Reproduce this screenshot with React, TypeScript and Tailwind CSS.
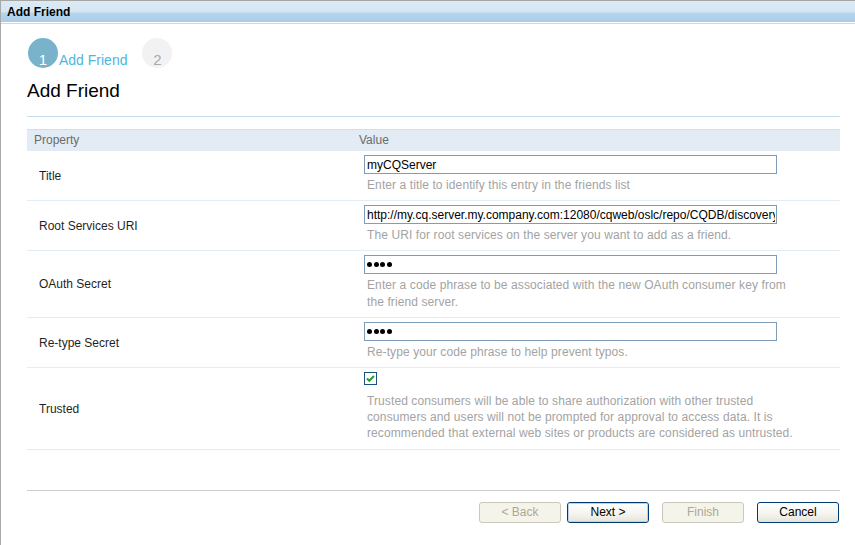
import React from 'react';

const font = { fontFamily: '"Liberation Sans", Arial, sans-serif' };

type Row = {
  label: string;
  kind: 'text' | 'password' | 'check';
  value?: string;
  help: string;
};

const rows: Row[] = [
  { label: 'Title', kind: 'text', value: 'myCQServer', help: 'Enter a title to identify this entry in the friends list' },
  {
    label: 'Root Services URI',
    kind: 'text',
    value: 'http://my.cq.server.my.company.com:12080/cqweb/oslc/repo/CQDB/discovery',
    help: 'The URI for root services on the server you want to add as a friend.',
  },
  {
    label: 'OAuth Secret',
    kind: 'password',
    help: 'Enter a code phrase to be associated with the new OAuth consumer key from the friend server.',
  },
  { label: 'Re-type Secret', kind: 'password', help: 'Re-type your code phrase to help prevent typos.' },
  {
    label: 'Trusted',
    kind: 'check',
    help: 'Trusted consumers will be able to share authorization with other trusted consumers and users will not be prompted for approval to access data. It is recommended that external web sites or products are considered as untrusted.',
  },
];

const Checkbox: React.FC = () => (
  <div className="w-[13px] h-[13px] border border-[#1c5180] bg-white flex items-center justify-center">
    <svg width="9" height="9" viewBox="0 0 9 9">
      <path d="M1 4.5 L3.3 6.8 L8 2" stroke="#21a121" strokeWidth="2" fill="none" />
    </svg>
  </div>
);

// masked field, drawn so the dots look like the old Windows bullets
const PasswordBox: React.FC = () => (
  <div className="w-[413px] h-[19px] border border-[#7f9db9] bg-white pl-[2px] flex items-center gap-[1.5px]">
    <span className="w-[5px] h-[5px] rounded-full bg-black" />
    <span className="w-[5px] h-[5px] rounded-full bg-black" />
    <span className="w-[5px] h-[5px] rounded-full bg-black" />
    <span className="w-[5px] h-[5px] rounded-full bg-black" />
  </div>
);

const WizButton: React.FC<{ label: string; disabled?: boolean; primary?: boolean }> = ({ label, disabled, primary }) => {
  if (disabled) {
    return (
      <div className="w-[82px] h-[21px] rounded-[3px] border border-[#cac8bb] bg-[#f5f4ea] text-[#aca899] text-[12px] leading-[19px] text-center">
        {label}
      </div>
    );
  }
  return (
    <div className="w-[82px] h-[21px] rounded-[3px] border border-[#003c74] bg-[linear-gradient(to_bottom,#ffffff,#f3f3ef_60%,#e6e4d8)] text-black text-[12px] text-center">
      <div
        className={
          primary
            ? 'h-full rounded-[2px] border border-[#b9d1ea] leading-[17px]'
            : 'h-full leading-[19px]'
        }
      >
        {label}
      </div>
    </div>
  );
};

const App: React.FC = () => {
  return (
    <div className="w-[855px] h-[545px] bg-white border-l border-[#a9a9a9] overflow-hidden" style={font}>
      {/* Title bar */}
      <div className="h-[22px] border-t border-[#a5a5a5] bg-[linear-gradient(to_bottom,#dceaf6_0px,#d5e6f3_11px,#b6d5ec_12px,#a9cce8_100%)] pl-[6px] pt-[2px]">
        <span className="block text-[12px] leading-[19px] font-bold text-black">Add Friend</span>
      </div>
      <div className="h-px bg-white" />
      <div className="h-px bg-[#d6d6d6]" />

      <div className="pl-[26px] pr-[15px]">
        {/* Steps */}
        <div className="flex items-start mt-[14px] h-[30px]">
          <div className="w-[30px] h-[30px] ml-[1px] rounded-full bg-[#79b2cb] flex justify-center pt-[13px]">
            <span className="text-[15px] leading-[17px] text-white">1</span>
          </div>
          <span className="ml-[1px] mt-[14px] text-[14px] leading-[16px] text-[#4db6dc]">Add Friend</span>
          <div className="w-[30px] h-[30px] ml-[15px] rounded-full bg-[#f2f2f2] flex justify-center pt-[13px]">
            <span className="text-[15px] leading-[17px] text-[#a9a9a9]">2</span>
          </div>
        </div>

        <h1 className="mt-[12px] text-[19px] leading-[22px] text-black">Add Friend</h1>
        <div className="mt-[14px] h-px bg-[#c6dfed]" />

        {/* Property table */}
        <div className="mt-[12px]">
          <div className="flex h-[22px] border-t border-[#d0dfeb] bg-[#e3ecf4] text-[12px] leading-[21px] text-[#6b6b6b]">
            <div className="w-[325px] pl-[7px]">Property</div>
            <div className="flex-1 pl-[7px]">Value</div>
          </div>

          {rows.map((r) => (
            <div key={r.label} className="flex border-b border-[#e3edf5]">
              <div className="w-[325px] pl-[12px] flex items-center text-[12px] text-[#1f1f1f]">{r.label}</div>
              <div className={r.kind === 'check' ? 'flex-1 pl-[12px] pt-[4px] pb-[8px]' : 'flex-1 pl-[12px] pt-[4px] pb-[6px]'}>
                {r.kind === 'check' && <Checkbox />}
                {r.kind === 'password' && <PasswordBox />}
                {r.kind === 'text' && (
                  <input
                    readOnly
                    type="text"
                    value={r.value}
                    className="block w-[413px] h-[19px] border border-[#7f9db9] bg-white pl-[2px] pr-[1px] text-[12px] text-black outline-none"
                    style={font}
                  />
                )}
                <p
                  className={
                    r.kind === 'check'
                      ? 'ml-[3px] mt-[8px] w-[430px] text-[12px] leading-[16px] tracking-[0.1px] text-[#a3a3a3]'
                      : 'ml-[3px] mt-[3px] w-[430px] text-[12px] leading-[17px] tracking-[0.1px] text-[#a3a3a3]'
                  }
                >
                  {r.help}
                </p>
              </div>
            </div>
          ))}
        </div>

        {/* Footer */}
        <div className="mt-[40px] h-px bg-[#cccccc]" />
        <div className="mt-[11px] flex justify-end pr-[1px]">
          <WizButton label="< Back" disabled />
          <div className="ml-[6px]">
            <WizButton label="Next >" primary />
          </div>
          <div className="ml-[13px]">
            <WizButton label="Finish" disabled />
          </div>
          <div className="ml-[13px]">
            <WizButton label="Cancel" />
          </div>
        </div>
      </div>
    </div>
  );
};

export default App;
